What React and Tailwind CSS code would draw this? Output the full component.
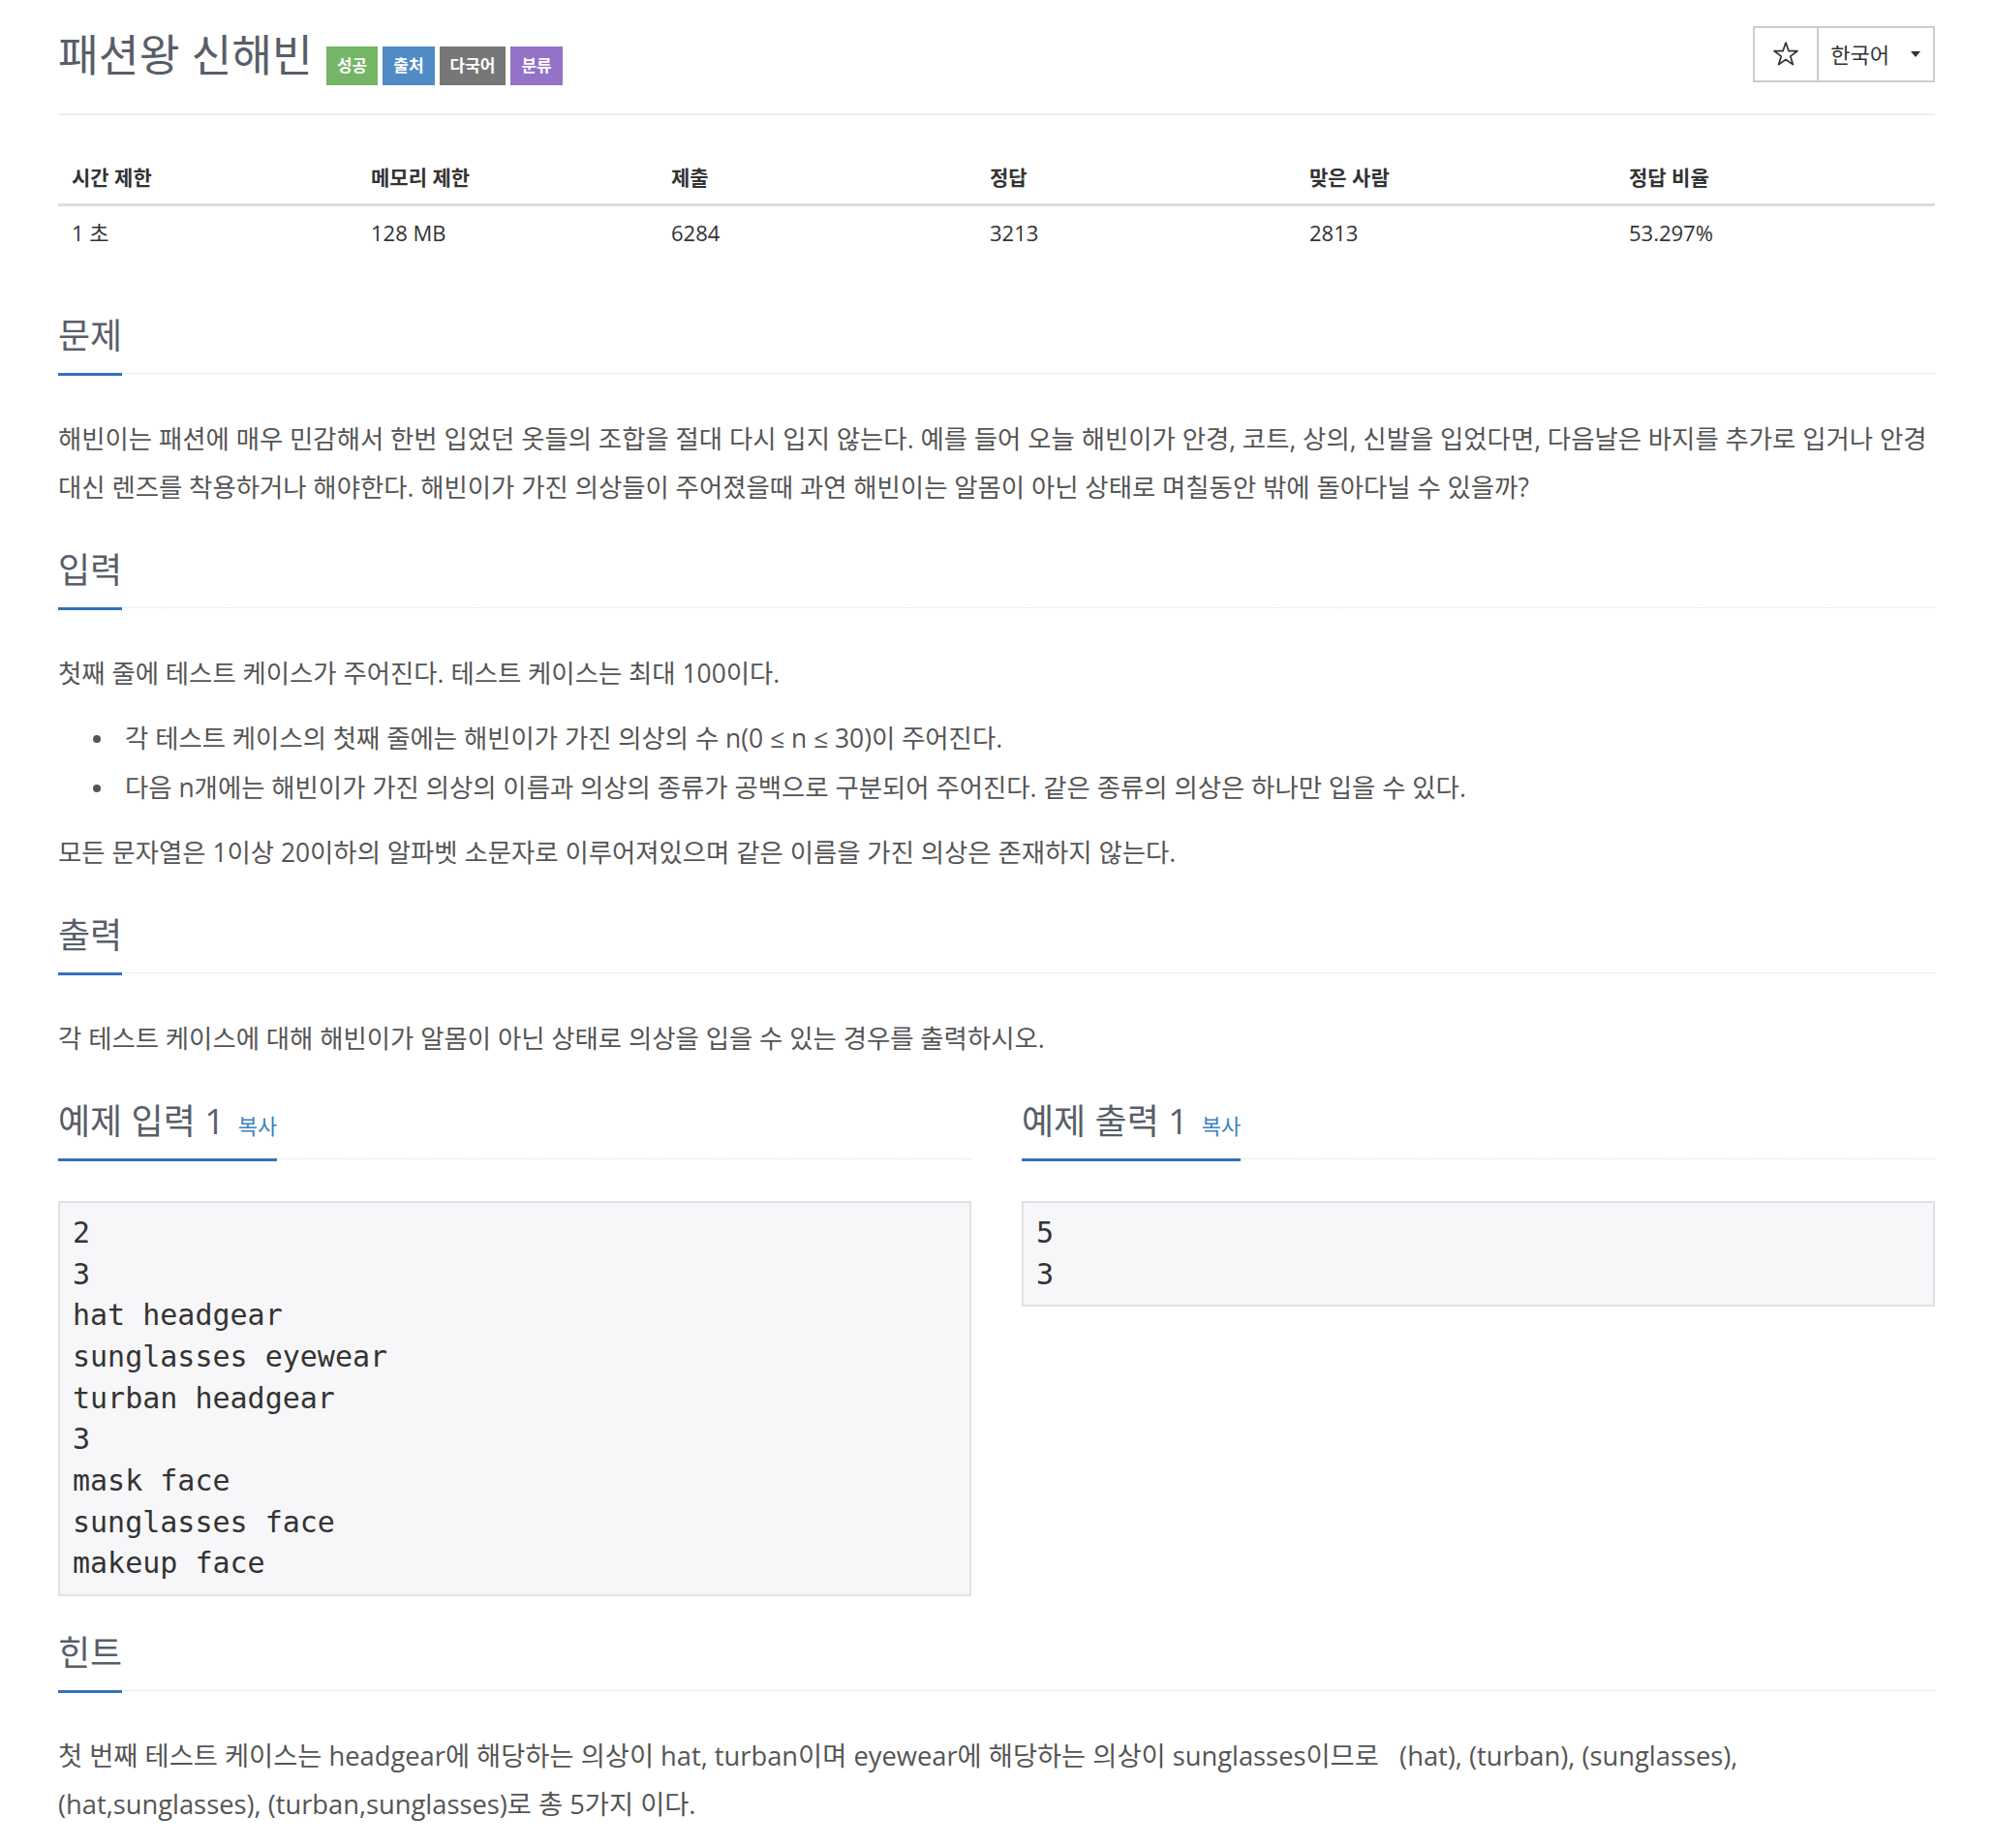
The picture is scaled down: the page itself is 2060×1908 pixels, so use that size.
import React from "react";

function Badge({ children, color }) {
  return (
    <span className={`flex h-[40px] items-center px-[11px] text-[17px] font-semibold text-white ${color}`}>
      {children}
    </span>
  );
}

function Headline({ children }) {
  return (
    <div className="flex border-b border-dotted border-[#d8dce3]">
      <h2 className="mb-[-3px] border-b-[3px] border-[#3173bb] pb-[14px] text-[36px] font-normal leading-[48px] text-[#585e68]">
        {children}
      </h2>
    </div>
  );
}

function Copy() {
  return <span className="ml-[14px] text-[22px] leading-none text-[#3d7fc1]">복사</span>;
}

function Bullet({ children }) {
  return (
    <li className="flex items-center leading-[51px]">
      <span className="ml-[36px] h-[8px] w-[8px] shrink-0 rounded-full bg-[#555]" />
      <span className="ml-[25px]">{children}</span>
    </li>
  );
}

export default function App() {
  const headers = ["시간 제한", "메모리 제한", "제출", "정답", "맞은 사람", "정답 비율"];
  const values = ["1 초", "128 MB", "6284", "3213", "2813", "53.297%"];
  return (
    <div className="min-h-screen bg-white font-['Open_Sans','Noto_Sans_CJK_KR',sans-serif] text-[#555]">
      <div className="pb-[20px] pl-[60px] pr-[62px]">
        {/* header */}
        <div className="flex items-start justify-between pt-[27px]">
          <div className="mt-[3px] flex items-start">
            <h1 className="text-[45.5px] font-normal leading-[52px] text-[#585e68]">패션왕 신해빈</h1>
            <div className="ml-[14px] mt-[18px] flex gap-[5px]">
              <Badge color="bg-[#74b566]">성공</Badge>
              <Badge color="bg-[#508bc5]">출처</Badge>
              <Badge color="bg-[#777777]">다국어</Badge>
              <Badge color="bg-[#9372c7]">분류</Badge>
            </div>
          </div>
          <div className="flex h-[58px] border-2 border-[#cccccc] text-[#333]">
            <div className="flex w-[66px] items-center justify-center border-r-2 border-[#cccccc]">
              <svg width="26" height="26" viewBox="0 0 24 24" fill="none" stroke="#333" strokeWidth="1.6" strokeLinejoin="round">
                <polygon points="12,1 14.7,8.78 22.94,8.95 16.37,13.92 18.76,21.8 12,17.1 5.24,21.8 7.63,13.92 1.06,8.95 9.3,8.78" />
              </svg>
            </div>
            <div className="flex items-center pl-[12px] pr-[13px] text-[22px]">
              <span>한국어</span>
              <span className="ml-[22px] h-0 w-0 border-l-[5.5px] border-r-[5.5px] border-t-[6px] border-l-transparent border-r-transparent border-t-[#333]" />
            </div>
          </div>
        </div>

        <div className="mt-[29px] h-[2px] bg-[#eeeeee]" />

        {/* info table */}
        <div className="mt-[37px] grid grid-cols-[309px_310px_329px_330px_330px_1fr] text-[#333]">
          {headers.map((h) => (
            <div key={h} className="border-b-[3px] border-[#dddddd] px-[14px] py-[12px] text-[21px] font-bold leading-[30px]">
              {h}
            </div>
          ))}
          {values.map((v) => (
            <div key={v} className="px-[14px] py-[12px] text-[22px] leading-[30px]">
              {v}
            </div>
          ))}
        </div>

        <div className="text-[26.4px] leading-[50px]">
          {/* 문제 */}
          <section className="mt-[56px]">
            <Headline>문제</Headline>
            <div className="mt-[42px]">
              <p className="mb-[17px]">
                <span className="whitespace-nowrap">
                  해빈이는 패션에 매우 민감해서 한번 입었던 옷들의 조합을 절대 다시 입지 않는다. 예를 들어 오늘 해빈이가 안경, 코트, 상의, 신발을 입었다면, 다음날은 바지를 추가로 입거나 안경
                </span>
                <br />
                대신 렌즈를 착용하거나 해야한다. 해빈이가 가진 의상들이 주어졌을때 과연 해빈이는 알몸이 아닌 상태로 며칠동안 밖에 돌아다닐 수 있을까?
              </p>
            </div>
          </section>

          {/* 입력 */}
          <section className="mt-[37px]">
            <Headline>입력</Headline>
            <div className="mt-[42px]">
              <p className="mb-[17px]">첫째 줄에 테스트 케이스가 주어진다. 테스트 케이스는 최대 100이다.</p>
              <ul className="mb-[16px]">
                <Bullet>각 테스트 케이스의 첫째 줄에는 해빈이가 가진 의상의 수 n(0 ≤ n ≤ 30)이 주어진다.</Bullet>
                <Bullet>다음 n개에는 해빈이가 가진 의상의 이름과 의상의 종류가 공백으로 구분되어 주어진다. 같은 종류의 의상은 하나만 입을 수 있다.</Bullet>
              </ul>
              <p className="mb-[17px]">모든 문자열은 1이상 20이하의 알파벳 소문자로 이루어져있으며 같은 이름을 가진 의상은 존재하지 않는다.</p>
            </div>
          </section>

          {/* 출력 */}
          <section className="mt-[37px]">
            <Headline>출력</Headline>
            <div className="mt-[42px]">
              <p className="mb-[17px]">각 테스트 케이스에 대해 해빈이가 알몸이 아닌 상태로 의상을 입을 수 있는 경우를 출력하시오.</p>
            </div>
          </section>

          {/* 예제 */}
          <div className="mt-[37px] grid grid-cols-2 gap-x-[52px]">
            <section>
              <Headline>
                예제 입력 1<Copy />
              </Headline>
              <pre className="mt-[43px] border-2 border-[#e1e1e8] bg-[#f7f7f9] px-[13px] py-[10px] font-['DejaVu_Sans_Mono',monospace] text-[30px] leading-[42.67px] text-[#333]">
{`2
3
hat headgear
sunglasses eyewear
turban headgear
3
mask face
sunglasses face
makeup face`}
              </pre>
            </section>
            <section>
              <Headline>
                예제 출력 1<Copy />
              </Headline>
              <pre className="mt-[43px] border-2 border-[#e1e1e8] bg-[#f7f7f9] px-[13px] py-[10px] font-['DejaVu_Sans_Mono',monospace] text-[30px] leading-[42.67px] text-[#333]">
{`5
3`}
              </pre>
            </section>
          </div>

          {/* 힌트 */}
          <section className="mt-[35px]">
            <Headline>힌트</Headline>
            <div className="mt-[42px]">
              <p className="mb-[17px] text-[27.3px]">
                <span className="whitespace-nowrap">
                  첫 번째 테스트 케이스는 headgear에 해당하는 의상이 hat, turban이며 eyewear에 해당하는 의상이 sunglasses이므로{"\u00a0\u00a0\u00a0"}(hat), (turban), (sunglasses),
                </span>
                <br />
                (hat,sunglasses), (turban,sunglasses)로 총 5가지 이다.
              </p>
            </div>
          </section>
        </div>
      </div>
    </div>
  );
}
